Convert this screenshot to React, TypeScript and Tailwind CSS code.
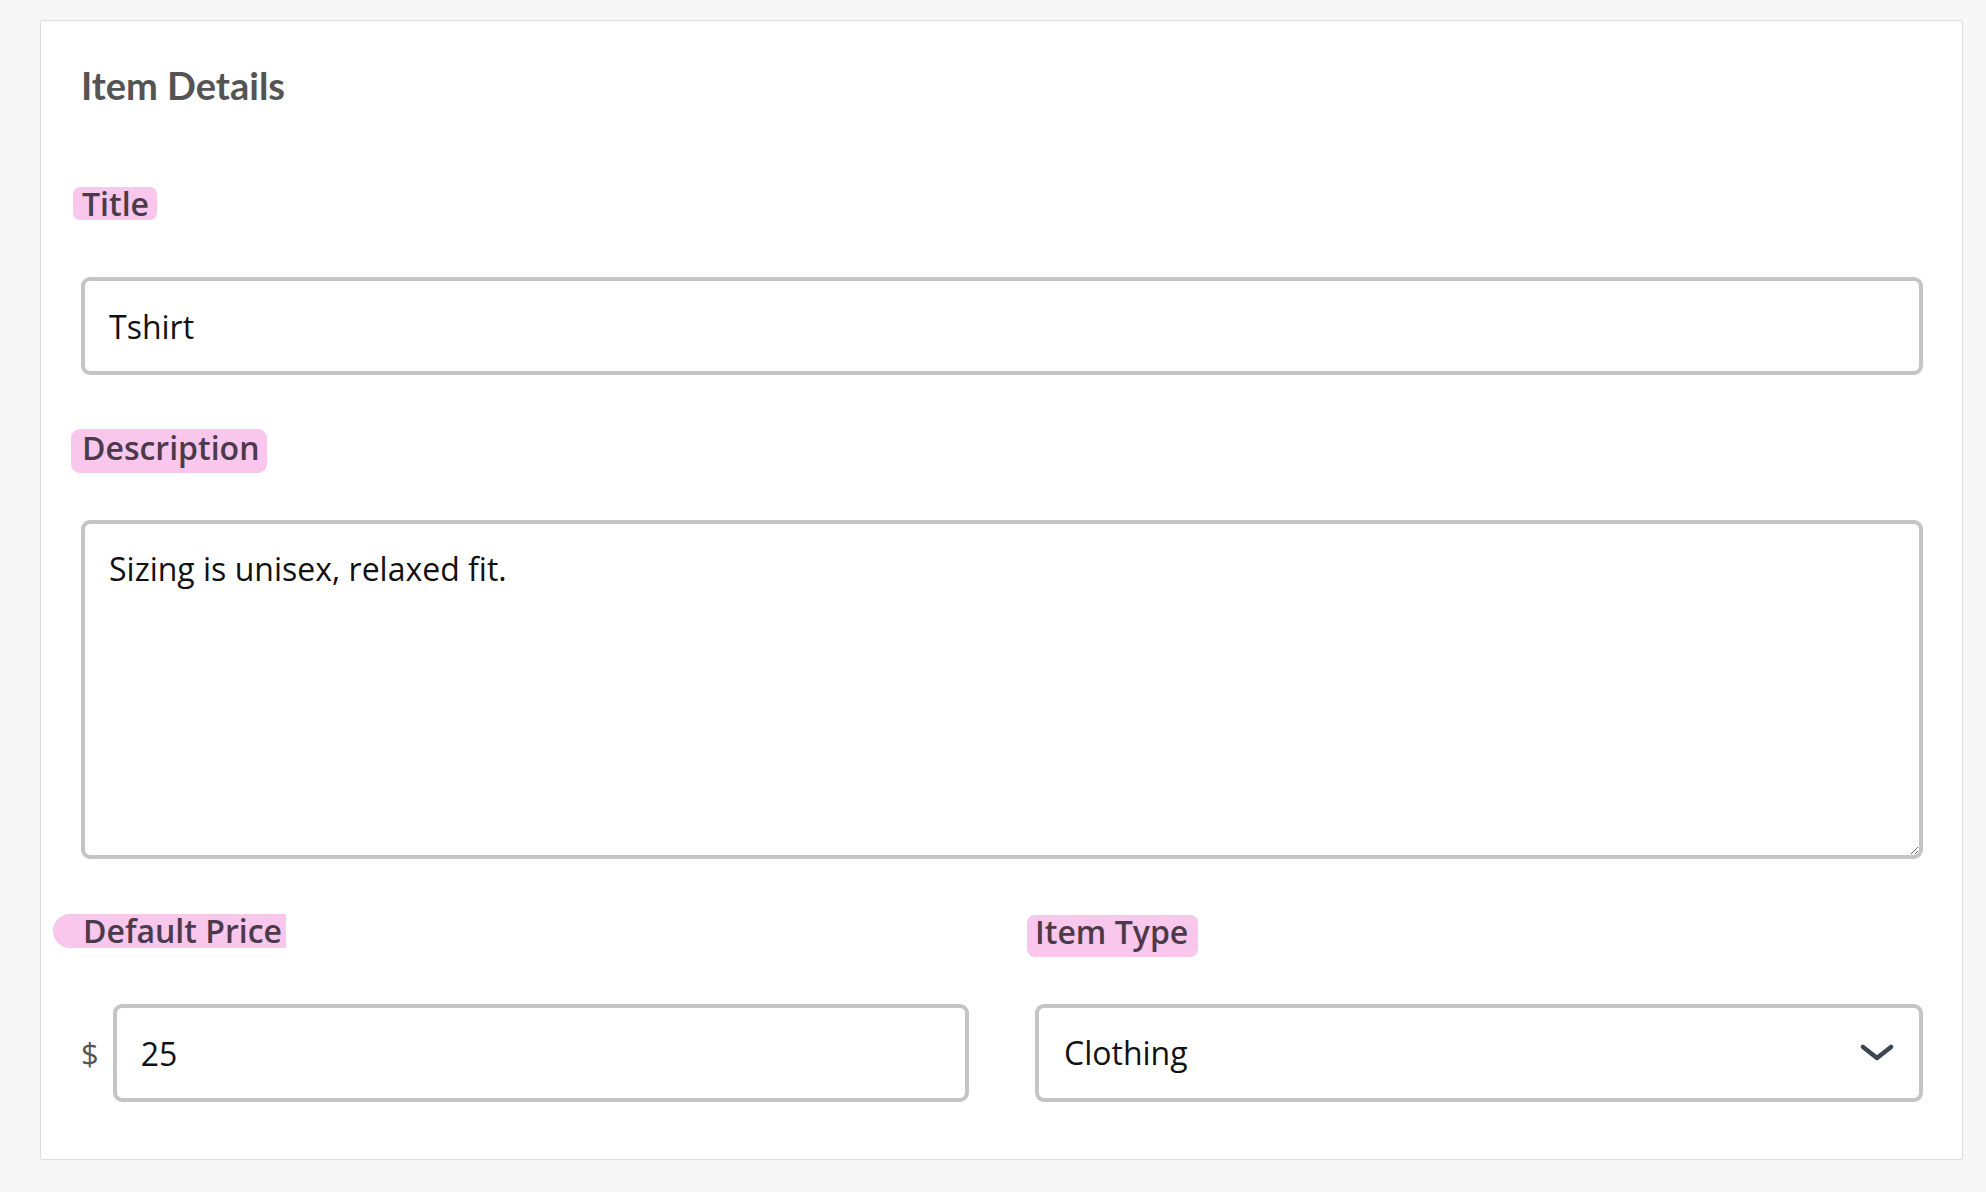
import React from 'react';

const labelBase =
  "inline-block whitespace-nowrap bg-[#f9c6ec] text-[#4b3a4a] text-[32px] font-semibold font-['Open_Sans',sans-serif]";

const fieldBase =
  "block w-full rounded-[9px] border-[4px] border-[#c4c4c4] bg-white px-[24px] text-[32px] text-[#111] font-['Open_Sans',sans-serif] outline-none";

const ItemDetails = () => {
  return (
    <div className="rounded-[2px] border border-[#dddddd] bg-white pt-[42px] pb-[57px] pl-[40px] pr-[39px]">
      <h2 className="text-[38px] leading-[44px] font-bold text-[#545454] font-['Lato',sans-serif]">
        Item Details
      </h2>

      <div className="mt-[80px]">
        <span className={`${labelBase} -ml-[8px] h-[33px] w-[84px] rounded-[7px] pl-[9px] leading-[33px]`}>
          Title
        </span>
      </div>
      <input
        className={`${fieldBase} mt-[55px] h-[98px]`}
        defaultValue="Tshirt"
      />

      <div className="mt-[54px]">
        <span className={`${labelBase} -ml-[10px] h-[44px] w-[196px] rounded-[9px] pl-[11px] leading-[38px]`}>
          Description
        </span>
      </div>
      <textarea
        className={`${fieldBase} mt-[47px] h-[339px] pt-[21px] leading-[1.5]`}
        defaultValue="Sizing is unisex, relaxed fit."
      />

      <div className="mt-[55px] grid grid-cols-2 gap-x-[66px]">
        <div>
          <div className="h-[90px]">
            <span className={`${labelBase} -ml-[28px] h-[34px] w-[233px] rounded-l-full rounded-r-[7px] pl-[30px] leading-[34px]`}>
              Default Price
            </span>
          </div>
          <div className="flex items-center gap-[14px]">
            <span className="text-[31px] text-[#555] font-['Open_Sans',sans-serif]">$</span>
            <input className={`${fieldBase} h-[98px]`} defaultValue="25" />
          </div>
        </div>
        <div>
          <div className="h-[90px] pt-[1px]">
            <span className={`${labelBase} -ml-[8px] h-[42px] w-[171px] rounded-[8px] pl-[8px] leading-[33px]`}>
              Item Type
            </span>
          </div>
          <div className="relative">
            <select
              className={`${fieldBase} h-[98px] appearance-none pl-[25px]`}
              defaultValue="Clothing"
            >
              <option>Clothing</option>
              <option>Accessories</option>
              <option>Other</option>
            </select>
            <svg
              className="pointer-events-none absolute right-[29px] top-[40px] h-[18px] w-[34px]"
              viewBox="0 0 34 18"
              fill="none"
              stroke="#3d4550"
              strokeWidth="4.5"
              strokeLinecap="round"
              strokeLinejoin="round"
            >
              <path d="M3 3 L17 14 L31 3" />
            </svg>
          </div>
        </div>
      </div>
    </div>
  );
};

export default function App() {
  return (
    <div className="min-h-[1192px] bg-[#f7f7f7] pt-[20px] pl-[40px] pr-[23px]">
      <ItemDetails />
    </div>
  );
}
